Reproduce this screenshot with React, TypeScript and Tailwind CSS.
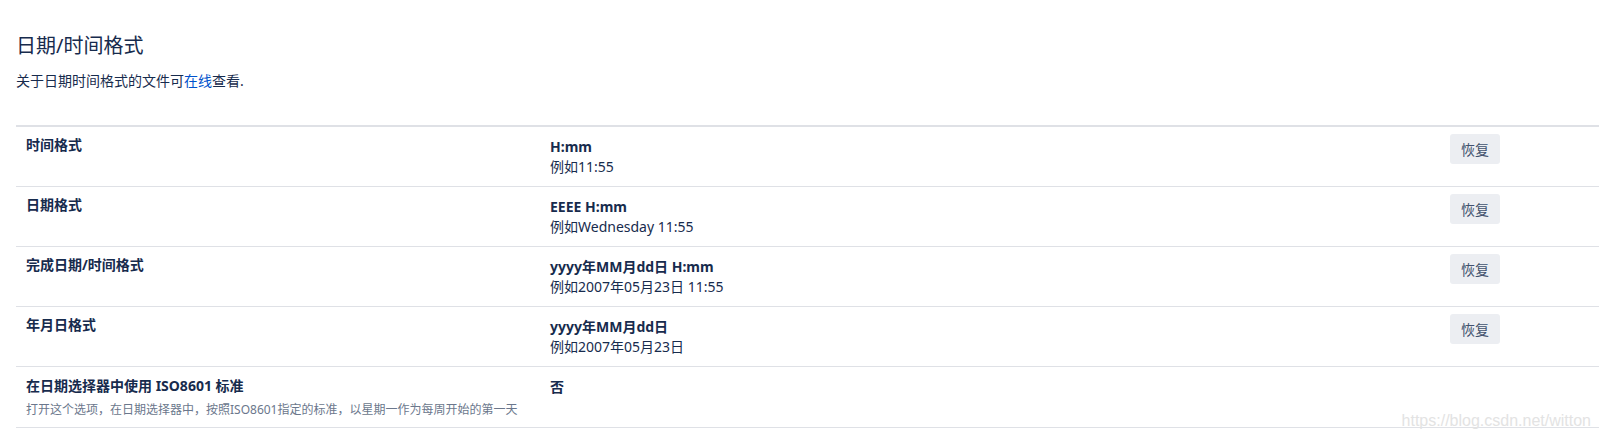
import React from 'react';

const rows = [
  { label: '时间格式', format: 'H:mm', example: '例如11:55', reset: true },
  { label: '日期格式', format: 'EEEE H:mm', example: '例如Wednesday 11:55', reset: true },
  { label: '完成日期/时间格式', format: 'yyyy年MM月dd日 H:mm', example: '例如2007年05月23日 11:55', reset: true },
  { label: '年月日格式', format: 'yyyy年MM月dd日', example: '例如2007年05月23日', reset: true },
];

export default function App() {
  return (
    <div
      className="relative h-[440px] w-full overflow-hidden bg-white pl-4 pt-[32px] text-[#172b4d]"
      style={{ fontFamily: '"Noto Sans", "Noto Sans CJK SC", sans-serif' }}
    >
      {/* Header */}
      <h2 className="text-[20px] leading-[28px] font-normal">日期/时间格式</h2>
      <p className="mt-[11px] text-[14px] leading-[20px]">
        关于日期时间格式的文件可<a className="text-[#0052cc]">在线</a>查看.
      </p>

      {/* Settings table */}
      <div className="mt-[34px] border-t-2 border-[#dfe1e6]">
        {rows.map((row) => (
          <div key={row.label} className="grid grid-cols-[524px_900px_1fr] border-b border-[#dfe1e6]">
            <div className="px-[10px] pt-[8px] text-[14px] leading-[20px] font-bold">{row.label}</div>
            <div className="px-[10px] pt-[10px] pb-[9px] text-[14px] leading-[20px]">
              <div className="font-bold">{row.format}</div>
              <div>{row.example}</div>
            </div>
            <div className="px-[10px] pt-[7px]">
              <button className="h-[30px] w-[50px] rounded-[3px] bg-[#eceef2] text-[14px] text-[#42526e]">恢复</button>
            </div>
          </div>
        ))}

        <div className="grid grid-cols-[524px_900px_1fr] border-b border-[#dfe1e6]">
          <div className="px-[10px] pt-[9px] pb-[9px]">
            <div className="text-[14px] leading-[20px] font-bold">在日期选择器中使用 ISO8601 标准</div>
            <div className="mt-[6px] text-[12px] leading-[16px] text-[#6b778c]">
              打开这个选项，在日期选择器中，按照ISO8601指定的标准，以星期一作为每周开始的第一天
            </div>
          </div>
          <div className="px-[10px] pt-[10px] text-[14px] leading-[20px] font-bold">否</div>
          <div />
        </div>
      </div>

      {/* Watermark */}
      <div
        className="absolute right-[8px] bottom-[10px] text-[16px] leading-[18px] text-[#e3e3e3]"
        style={{ fontFamily: '"Liberation Sans", sans-serif' }}
      >
        https://blog.csdn.net/witton
      </div>
    </div>
  );
}
